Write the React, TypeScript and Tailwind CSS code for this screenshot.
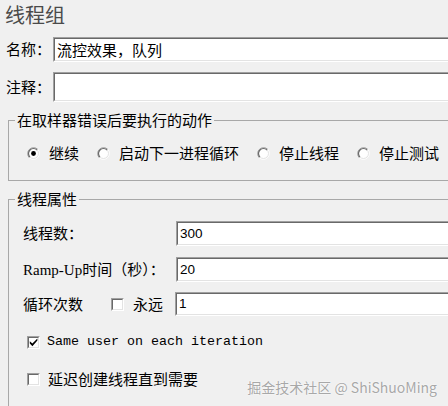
import React from "react";

const CJK = '"Noto Sans CJK SC", "Liberation Sans", sans-serif';

function Field({ value = "", h = 25, numeric = false }: { value?: string; h?: number; numeric?: boolean }) {
  return (
    <div
      className="flex-1 bg-white border border-t-[#a0a0a0] border-l-[#a0a0a0] border-b-white border-r-white"
      style={{ height: h }}
    >
      <div className="h-full border border-t-[#696969] border-l-[#696969] border-b-[#e3e3e3] border-r-[#e3e3e3] flex items-center pl-[2px]">
        <span
          className={numeric ? "text-[13.5px] text-black leading-none" : "text-[15px] text-black leading-none"}
          style={{ fontFamily: numeric ? '"Liberation Sans", sans-serif' : CJK }}
        >
          {value}
        </span>
      </div>
    </div>
  );
}

function Radio({ checked = false }: { checked?: boolean }) {
  return (
    <svg width="13" height="13" viewBox="0 0 13 13" className="shrink-0">
      <circle cx="6.5" cy="6.5" r="5.5" fill="#fff" />
      <path d="M2.26 10.74 A6 6 0 0 1 10.74 2.26" fill="none" stroke="#a0a0a0" strokeWidth="1" />
      <path d="M10.74 2.26 A6 6 0 0 1 2.26 10.74" fill="none" stroke="#ffffff" strokeWidth="1" />
      <path d="M2.96 10.04 A5 5 0 0 1 10.04 2.96" fill="none" stroke="#696969" strokeWidth="1.2" />
      <path d="M10.04 2.96 A5 5 0 0 1 2.96 10.04" fill="none" stroke="#e3e3e3" strokeWidth="1" />
      {checked && <circle cx="6.5" cy="6.5" r="2.4" fill="#000" />}
    </svg>
  );
}

function Check({ checked = false }: { checked?: boolean }) {
  return (
    <div className="w-[13px] h-[13px] shrink-0 bg-white border border-t-[#a0a0a0] border-l-[#a0a0a0] border-b-white border-r-white">
      <div className="w-full h-full border border-t-[#696969] border-l-[#696969] border-b-[#e3e3e3] border-r-[#e3e3e3] relative">
        {checked && (
          <svg width="9" height="9" viewBox="0 0 9 9" className="absolute left-0 top-0">
            <path d="M0.8 3.2 L0.8 5.6 L3.4 8.2 L8.4 2.6 L8.4 0.4 L3.4 5.4 Z" fill="#000" />
          </svg>
        )}
      </div>
    </div>
  );
}

function RadioItem({ label, checked = false }: { label: string; checked?: boolean }) {
  return (
    <div className="flex items-center gap-[9px] mr-[18px]">
      <Radio checked={checked} />
      <span className="text-[15px] leading-5 text-black whitespace-nowrap" style={{ fontFamily: CJK }}>
        {label}
      </span>
    </div>
  );
}

export default function App() {
  return (
    <div className="relative w-[448px] h-[406px] overflow-hidden bg-[#f0f0f0]" style={{ fontFamily: CJK }}>
      <div className="w-[480px] flex flex-col">
        <div className="pt-[3px] pl-[5px] h-[27px] text-[20px] leading-6 text-[#4a4a4a]">线程组</div>

        <div className="mt-[10px] flex items-center">
          <span className="w-[53px] pl-[6px] text-[15px] text-black">名称：</span>
          <Field value="流控效果，队列" h={25} />
        </div>
        <div className="mt-[10px] flex items-center">
          <span className="w-[53px] pl-[6px] text-[15px] text-black">注释：</span>
          <Field h={30} />
        </div>

        <fieldset className="mt-[8px] ml-[8px] border border-[#a8a8a8] p-0">
          <legend className="ml-[6px] px-[2px] text-[15px] leading-5 text-black">在取样器错误后要执行的动作</legend>
          <div className="flex items-center pl-[18px] pt-[13px] pb-[17px]">
            <RadioItem label="继续" checked />
            <RadioItem label="启动下一进程循环" />
            <RadioItem label="停止线程" />
            <RadioItem label="停止测试" />
          </div>
        </fieldset>

        <fieldset className="mt-[8px] ml-[8px] border border-[#a8a8a8] p-0 h-[240px]">
          <legend className="ml-[6px] px-[2px] text-[15px] leading-5 text-black">线程属性</legend>
          <div className="flex flex-col pt-[12px]">
            <div className="flex items-center">
              <span className="w-[167px] pl-[14px] text-[15px] text-black">线程数：</span>
              <Field value="300" numeric h={25} />
            </div>
            <div className="mt-[11px] flex items-center">
              <span className="w-[167px] pl-[14px] text-[15px] text-black whitespace-nowrap">
                <span style={{ fontFamily: '"Liberation Serif", serif' }}>Ramp-Up</span>时间（秒）：
              </span>
              <Field value="20" numeric h={25} />
            </div>
            <div className="mt-[10px] flex items-center">
              <span className="w-[102px] pl-[14px] text-[15px] text-black">循环次数</span>
              <Check />
              <span className="ml-[9px] w-[42px] text-[15px] text-black">永远</span>
              <Field value="1" numeric h={24} />
            </div>
            <div className="mt-[16px] h-5 flex items-center pl-[18px] gap-[7px]">
              <Check checked />
              <span className="text-[13.33px] text-black whitespace-nowrap" style={{ fontFamily: '"Liberation Mono", monospace' }}>
                Same user on each iteration
              </span>
            </div>
            <div className="mt-[17px] h-5 flex items-center pl-[18px] gap-[8px]">
              <Check />
              <span className="text-[15px] text-black">延迟创建线程直到需要</span>
            </div>
          </div>
        </fieldset>
      </div>

      <div className="absolute right-[11px] bottom-[9px] text-[14px] leading-5 text-[#a8a8a8] [text-shadow:0_0_2px_#ffffff,0_0_1px_#ffffff] whitespace-nowrap">
        掘金技术社区 @ ShiShuoMing
      </div>
    </div>
  );
}
